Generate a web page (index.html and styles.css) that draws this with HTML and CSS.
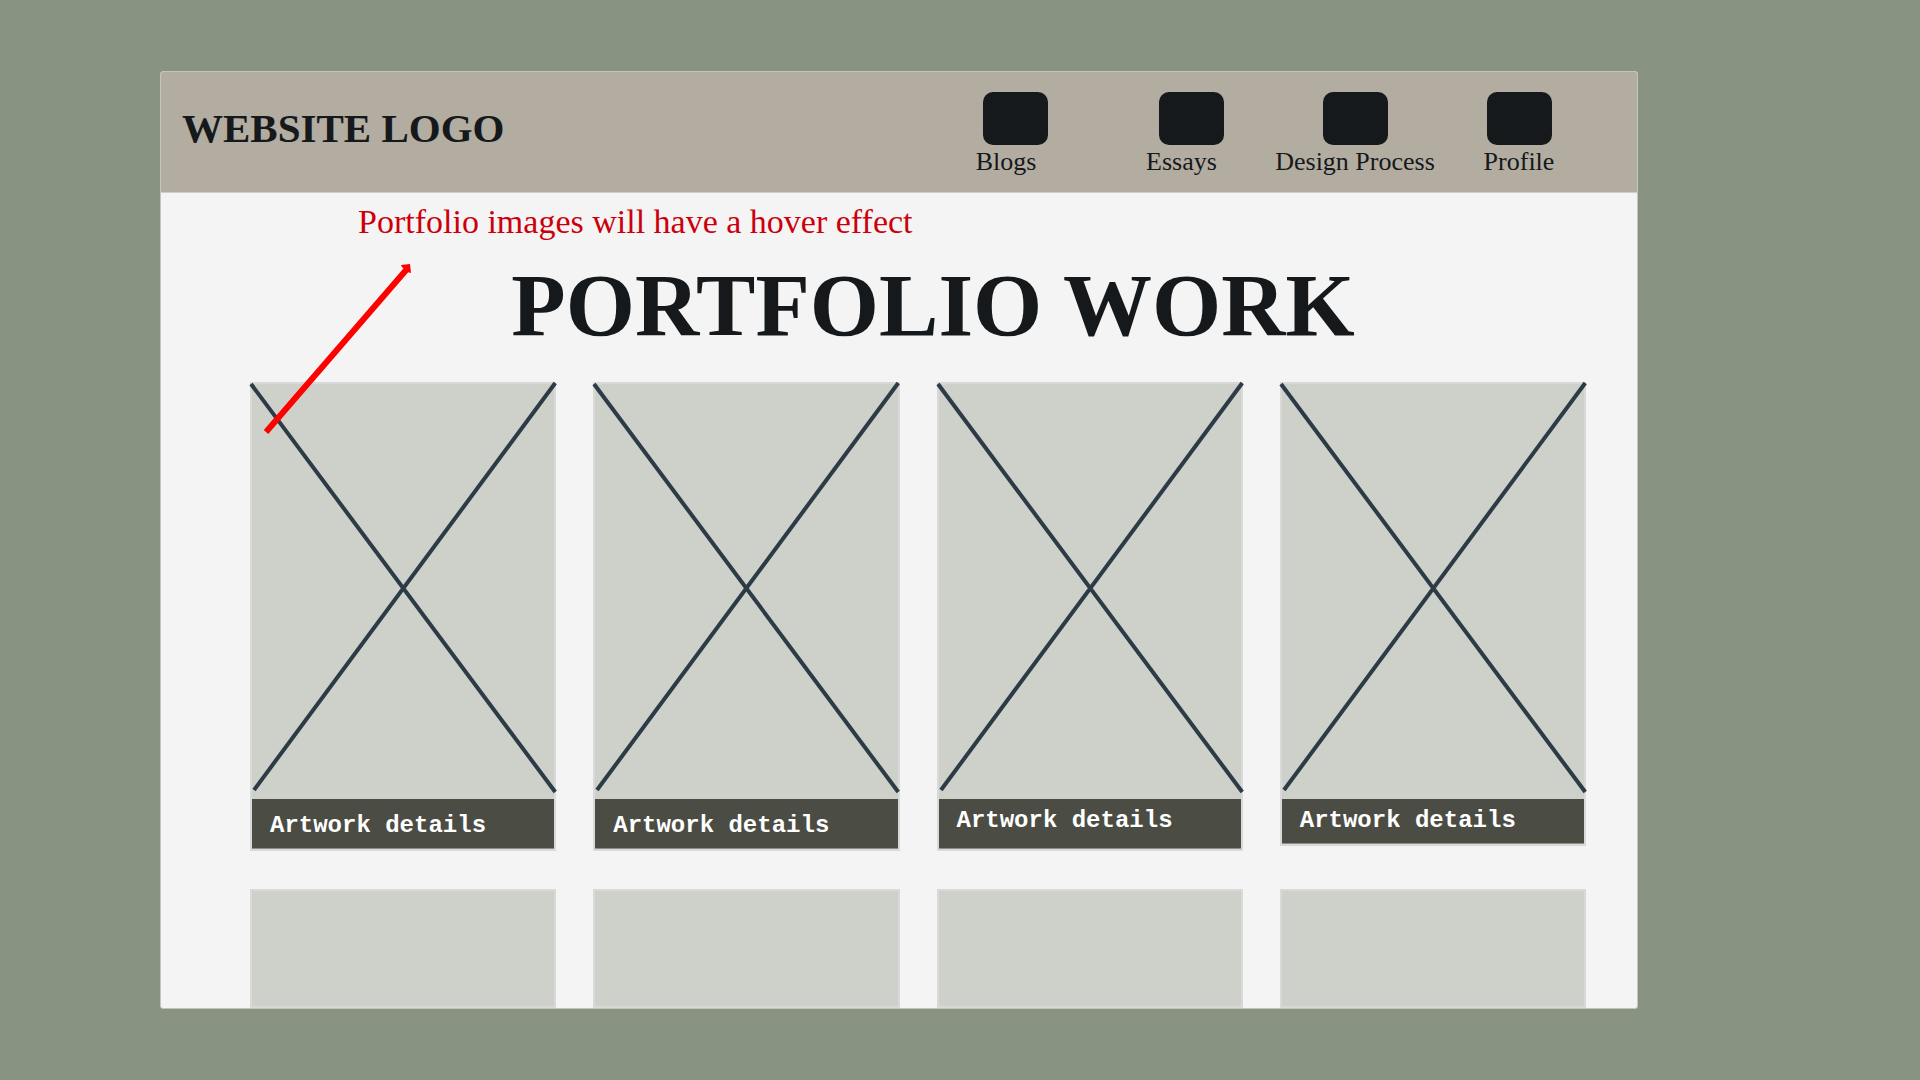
FILE: index.html
```html
<!DOCTYPE html>
<html lang="en">
<head>
<meta charset="utf-8">
<title>Portfolio Work</title>
<link rel="stylesheet" href="styles.css">
</head>
<body>
<div class="frame">
  <header class="header">
    <div class="logo">WEBSITE LOGO</div>
    <nav class="nav">
      <a class="nav-item" href="#blogs"><span class="nav-icon"></span><span class="nav-label nav-label-start">Blogs</span></a>
      <a class="nav-item" href="#essays"><span class="nav-icon"></span><span class="nav-label nav-label-start">Essays</span></a>
      <a class="nav-item" href="#process"><span class="nav-icon"></span><span class="nav-label">Design Process</span></a>
      <a class="nav-item" href="#profile"><span class="nav-icon"></span><span class="nav-label">Profile</span></a>
    </nav>
  </header>
  <main class="main">
    <p class="note">Portfolio images will have a hover effect</p>
    <h1 class="title">PORTFOLIO WORK</h1>
    <div class="gallery">
      <figure class="card">
        <svg class="image" viewBox="0 0 302 415" preserveAspectRatio="none" aria-hidden="true"><path d="M-1 0L303 408M303 -1L2 406"/></svg>
        <figcaption class="caption">Artwork details</figcaption>
      </figure>
      <figure class="card">
        <svg class="image" viewBox="0 0 302 415" preserveAspectRatio="none" aria-hidden="true"><path d="M-1 0L303 408M303 -1L2 406"/></svg>
        <figcaption class="caption">Artwork details</figcaption>
      </figure>
      <figure class="card">
        <svg class="image" viewBox="0 0 302 415" preserveAspectRatio="none" aria-hidden="true"><path d="M-1 0L303 408M303 -1L2 406"/></svg>
        <figcaption class="caption caption-raised">Artwork details</figcaption>
      </figure>
      <figure class="card">
        <svg class="image" viewBox="0 0 302 415" preserveAspectRatio="none" aria-hidden="true"><path d="M-1 0L303 408M303 -1L2 406"/></svg>
        <figcaption class="caption caption-short">Artwork details</figcaption>
      </figure>
      <div class="card card-empty"></div>
      <div class="card card-empty"></div>
      <div class="card card-empty"></div>
      <div class="card card-empty"></div>
    </div>
    <svg class="arrow" width="150" height="174" viewBox="0 0 150 174" aria-hidden="true">
      <path class="arrow-line" d="M4 169L145 6"/>
      <path class="arrow-head" d="M139 2L148 1L149 10L145 9L140 4Z"/>
    </svg>
  </main>
</div>
</body>
</html>
```
FILE: styles.css
```css
* {
  box-sizing: border-box;
}

body {
  margin: 0;
  min-height: 100vh;
  padding: 71px 282px 71px 160px;
  background: #889382;
  color: #15191b;
  font-family: "Liberation Serif", serif;
}

.frame {
  overflow: hidden;
  border: 1px solid #c3c6bd;
  border-radius: 3px;
  background: #f4f4f4;
}

.header {
  display: flex;
  align-items: flex-start;
  justify-content: space-between;
  height: 121px;
  padding: 20px 36px 0 21px;
  border-bottom: 1px solid #d3cec5;
  background: #b3aca0;
}

.logo {
  padding-top: 12px;
  font-size: 41px;
  font-weight: 700;
  line-height: 48px;
  white-space: nowrap;
}

.nav {
  display: grid;
  grid-template-columns: 187px 164px 164px 164px;
}

.nav-item {
  display: flex;
  flex-direction: column;
  align-items: center;
  gap: 2px;
  color: inherit;
  text-decoration: none;
}

.nav-icon {
  width: 65px;
  height: 53px;
  border-radius: 10px;
  background: #15191b;
}

.nav-label {
  font-size: 26px;
  line-height: 30px;
}

.nav-label-start {
  padding-right: 19px;
}

.main {
  position: relative;
  padding: 8px 51px 0 89px;
}

.note {
  margin: 0 0 0 108px;
  color: #cc000c;
  font-size: 34px;
  line-height: 42px;
}

.title {
  margin: 10px 0 25px;
  padding-left: 30px;
  font-size: 89px;
  font-weight: 700;
  line-height: 104px;
  text-align: center;
}

.gallery {
  display: grid;
  grid-template-columns: repeat(4, 1fr);
  align-items: start;
  gap: 38px 37px;
}

.card {
  margin: 0;
  border: 2px solid #d8d9d8;
  background: #ced0ca;
}

.card:hover {
  border-color: #889382;
}

.card-empty {
  height: 119px;
}

.image {
  display: block;
  width: 100%;
  height: 415px;
  overflow: visible;
  fill: none;
  stroke: #2d3b46;
  stroke-width: 4;
}

.caption {
  height: 50px;
  padding: 13px 18px 0;
  border-bottom: 1px solid #8f8d87;
  background: #4b4d44;
  color: #fff;
  font-family: "Liberation Mono", monospace;
  font-size: 24px;
  font-weight: 700;
  line-height: 28px;
}

.caption-raised {
  padding-top: 8px;
}

.caption-short {
  height: 45px;
  padding-top: 8px;
}

.arrow {
  position: absolute;
  top: 70px;
  left: 101px;
}

.arrow-line {
  fill: none;
  stroke: #f00;
  stroke-width: 6;
}

.arrow-head {
  fill: #f00;
}
```
